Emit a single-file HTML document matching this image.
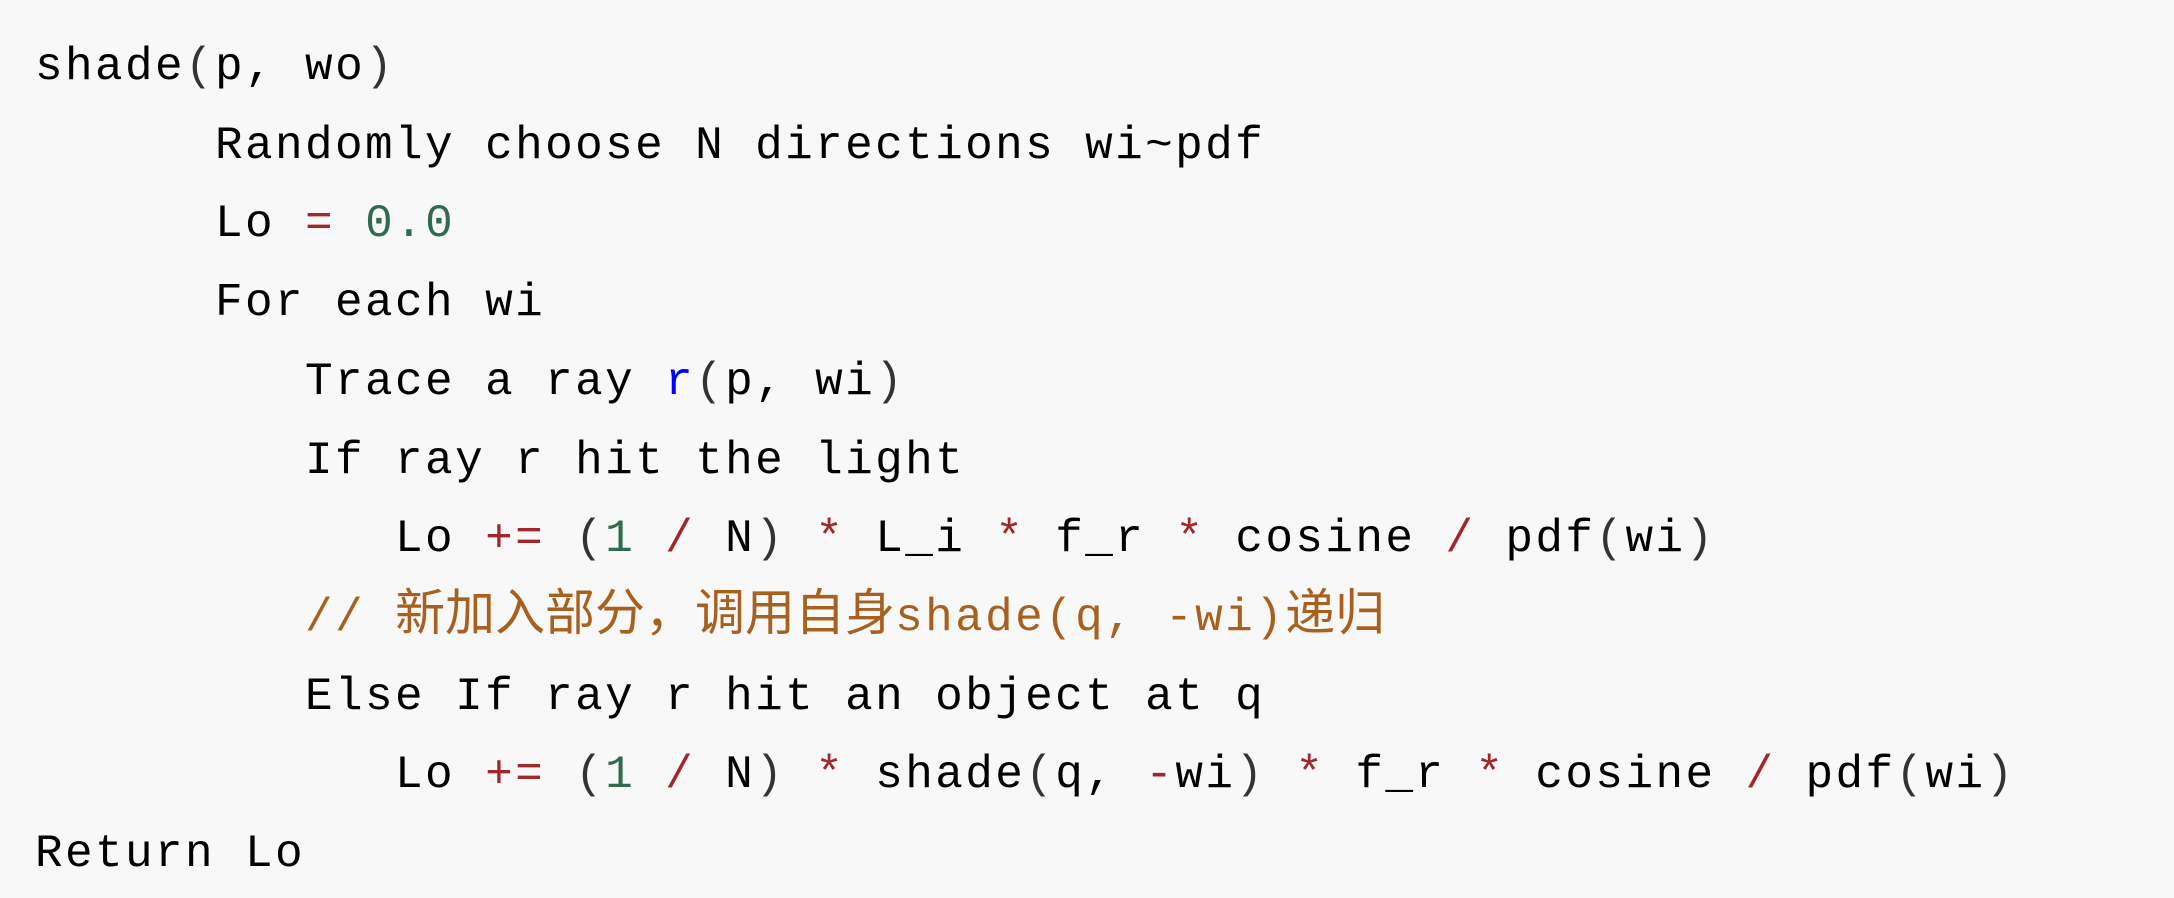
<!DOCTYPE html>
<html><head><meta charset="utf-8"><style>
html,body{margin:0;padding:0;background:#f8f8f8;width:2174px;height:898px;overflow:hidden}
pre{margin:0;padding:28px 0 0 35px;font-family:"Liberation Mono","Noto Sans CJK SC",monospace;font-size:46px;letter-spacing:2.4px;line-height:78.7px;color:#000}
.r{color:#a0282a}.g{color:#2f6b4f}.b{color:#0000ff}.c{color:#a8601f}.p{color:#333}
.z{font-size:50px;letter-spacing:0}
</style></head><body><pre>shade<span class="p">(</span>p, wo<span class="p">)</span>
      Randomly choose N directions wi~pdf
      Lo <span class="r">=</span> <span class="g">0.0</span>
      For each wi
         Trace a ray <span class="b">r</span><span class="p">(</span>p, wi<span class="p">)</span>
         If ray r hit the light
            Lo <span class="r">+=</span> <span class="p">(</span><span class="g">1</span> <span class="r">/</span> N<span class="p">)</span> <span class="r">*</span> L_i <span class="r">*</span> f_r <span class="r">*</span> cosine <span class="r">/</span> pdf<span class="p">(</span>wi<span class="p">)</span>
         <span class="c">// <span class="z">新加入部分，调用自身</span>shade(q, -wi)<span class="z">递归</span></span>
         Else If ray r hit an object at q
            Lo <span class="r">+=</span> <span class="p">(</span><span class="g">1</span> <span class="r">/</span> N<span class="p">)</span> <span class="r">*</span> shade<span class="p">(</span>q, <span class="r">-</span>wi<span class="p">)</span> <span class="r">*</span> f_r <span class="r">*</span> cosine <span class="r">/</span> pdf<span class="p">(</span>wi<span class="p">)</span>
Return Lo</pre></body></html>
